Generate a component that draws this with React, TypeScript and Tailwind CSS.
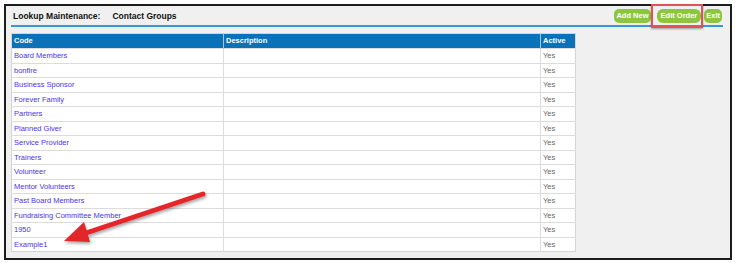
const rows = [
  "Board Members",
  "bonfire",
  "Business Sponsor",
  "Forever Family",
  "Partners",
  "Planned Giver",
  "Service Provider",
  "Trainers",
  "Volunteer",
  "Mentor Volunteers",
  "Past Board Members",
  "Fundraising Committee Member",
  "1950",
  "Example1",
];

const App: React.FC = () => {
  return (
    <div className="w-[738px] h-[263px] bg-white pt-[4px] pl-[4px] font-['Liberation_Sans',Arial,sans-serif]">
      <div className="relative w-[728px] h-[256px] border-2 border-[#1c1c1c] bg-[#f0f0f0] pl-[5px] pr-[7px]">
        <div className="flex items-center justify-between h-[21px] pt-[1px] border-b-2 border-[#3a98d8]">
          <div className="flex items-center pl-[2px] text-[8.5px] font-bold text-[#111]">
            <span>Lookup Maintenance:</span>
            <span className="ml-[12px]">Contact Groups</span>
          </div>
          <div className="flex items-center text-[7.5px] font-bold text-white mr-[1px]">
            <button className="h-[14px] px-[2px] rounded-[5px] bg-[#8cc63f]">Add New</button>
            <div className="relative ml-[6px]">
              <button className="h-[14px] px-[4px] rounded-[6px] bg-[#8cc63f]">Edit Order</button>
              <div className="absolute -left-[6px] -right-[2px] -top-[5px] -bottom-[5px] border-2 border-[#e0525a] shadow-[0_1px_2px_rgba(0,0,0,0.35)]" />
            </div>
            <button className="ml-[3px] h-[14px] px-[2px] rounded-[5px] bg-[#8cc63f]">Exit</button>
          </div>
        </div>

        <table className="mt-[6px] border-collapse border border-[#d4d4d4] text-[7.5px] table-fixed w-[565px]">
          <thead>
            <tr className="bg-[#0b72ba] text-white font-bold h-[15px]">
              <th className="w-[212px] text-left font-bold pl-[2px] border-r border-[#a8c6de]">Code</th>
              <th className="w-[317px] text-left font-bold pl-[2px] border-r border-[#a8c6de]">Description</th>
              <th className="text-left font-bold pl-[2px]">Active</th>
            </tr>
          </thead>
          <tbody>
            {rows.map((r) => (
              <tr key={r} className="h-[14.5px] bg-white border-t border-[#dcdcdc]">
                <td className="pl-[2px] text-[#4a34f0] border-r border-[#dcdcdc] whitespace-nowrap">{r}</td>
                <td className="border-r border-[#dcdcdc]"></td>
                <td className="pl-[2px] text-[#666]">Yes</td>
              </tr>
            ))}
          </tbody>
        </table>

        <svg className="absolute left-0 top-0 pointer-events-none" width="728" height="256">
          <defs>
            <filter id="sh" x="-20%" y="-20%" width="140%" height="140%">
              <feDropShadow dx="1" dy="2" stdDeviation="1.5" floodColor="#000" floodOpacity="0.35" />
            </filter>
          </defs>
          <g filter="url(#sh)">
            <line x1="197" y1="188" x2="74" y2="229" stroke="#e3262a" strokeWidth="5" strokeLinecap="round" />
            <polygon points="58,235 78,216 84,236" fill="#e3262a" />
          </g>
        </svg>
      </div>
    </div>
  );
};

export default App;
